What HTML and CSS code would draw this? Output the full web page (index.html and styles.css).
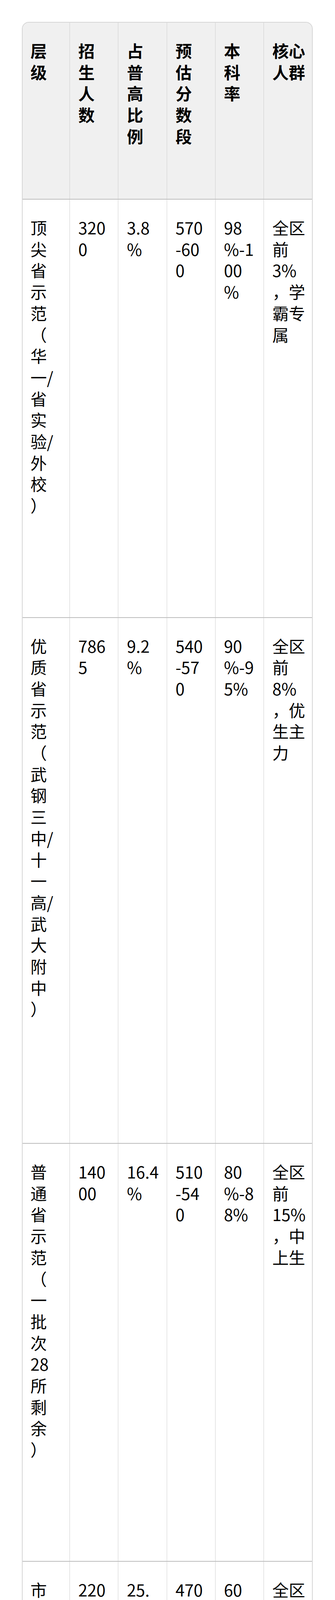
FILE: index.html
```html
<!DOCTYPE html>
<html lang="zh-CN">
<head>
<meta charset="utf-8">
<title>武汉中考各层级高中招生对照表</title>
<link rel="stylesheet" href="styles.css">
</head>
<body>
<div class="table-wrap">
  <table class="tier-table">
    <colgroup>
      <col class="c1"><col class="c2"><col class="c3"><col class="c4"><col class="c5"><col class="c6">
    </colgroup>
    <thead>
      <tr class="r-head">
        <th>层<br>级</th>
        <th>招<br>生<br>人<br>数</th>
        <th>占<br>普<br>高<br>比<br>例</th>
        <th>预<br>估<br>分<br>数<br>段</th>
        <th>本<br>科<br>率</th>
        <th>核心<br>人群</th>
      </tr>
    </thead>
    <tbody>
      <tr class="r1">
        <td>顶<br>尖<br>省<br>示<br>范<br>（<br>华<br>一/<br>省<br>实<br>验/<br>外<br>校<br>）</td>
        <td>320<br>0</td>
        <td>3.8<br>%</td>
        <td>570<br>-60<br>0</td>
        <td>98<br>%-1<br>00<br>%</td>
        <td>全区<br>前<br>3%<br>，学<br>霸专<br>属</td>
      </tr>
      <tr class="r2">
        <td>优<br>质<br>省<br>示<br>范<br>（<br>武<br>钢<br>三<br>中/<br>十<br>一<br>高/<br>武<br>大<br>附<br>中<br>）</td>
        <td>786<br>5</td>
        <td>9.2<br>%</td>
        <td>540<br>-57<br>0</td>
        <td>90<br>%-9<br>5%</td>
        <td>全区<br>前<br>8%<br>，优<br>生主<br>力</td>
      </tr>
      <tr class="r3">
        <td>普<br>通<br>省<br>示<br>范<br>（<br>一<br>批<br>次<br>28<br>所<br>剩<br>余<br>）</td>
        <td>140<br>00</td>
        <td>16.4<br>%</td>
        <td>510<br>-54<br>0</td>
        <td>80<br>%-8<br>8%</td>
        <td>全区<br>前<br>15%<br>，中<br>上生</td>
      </tr>
      <tr class="r4">
        <td>市<br>示<br>范<br>（<br>二<br>批<br>次<br>）</td>
        <td>220<br>00</td>
        <td>25.<br>8%</td>
        <td>470<br>-51<br>0</td>
        <td>60<br>%-7<br>5%</td>
        <td>全区<br>前<br>30%<br>，中<br>等生<br>（主<br>战场<br>）</td>
      </tr>
      <tr class="r5">
        <td>一<br>般<br>普<br>高<br>（<br>三<br>批<br>次<br>）</td>
        <td>180<br>00</td>
        <td>21.1<br>%</td>
        <td>430<br>-47<br>0</td>
        <td>35<br>%-5<br>5%</td>
        <td>全区<br>前<br>45%<br>，临<br>界生</td>
      </tr>
      <tr class="r6">
        <td>中<br>职<br>综<br>合<br>高<br>中<br>（<br>四<br>批<br>次<br>）</td>
        <td>800<br>0</td>
        <td>9.4<br>%</td>
        <td>400<br>-43<br>0</td>
        <td>25<br>%-4<br>0%<br>（<br>职<br>教<br>高<br>考<br>）</td>
        <td>全区<br>前<br>50<br>%，<br>兜底<br>生</td>
      </tr>
      <tr class="r7 total">
        <td>普<br>高<br>总<br>计</td>
        <td>852<br>49</td>
        <td>100<br>%</td>
        <td>400<br>-60<br>0</td>
        <td>—</td>
        <td>10.6<br>万考<br>生</td>
      </tr>
    </tbody>
  </table>
</div>
</body>
</html>
```
FILE: styles.css
```css
html, body {
  margin: 0;
  padding: 0;
  background: #ffffff;
}

body {
  padding: 56px 57px 0 56px;
  font-family: "Noto Sans CJK SC", "Noto Sans", sans-serif;
  color: #000000;
}

.table-wrap {
  width: 745px;
  box-sizing: border-box;
  border: 2px solid #d6d6d6;
  border-radius: 18px;
  overflow: hidden;
}

.tier-table {
  width: 100%;
  border-collapse: collapse;
  table-layout: fixed;
}

.c1 { width: 120px; }
.c2 { width: 124.5px; }
.c3 { width: 124.5px; }
.c4 { width: 124px; }
.c5 { width: 124px; }
.c6 { width: 124px; }

.tier-table th,
.tier-table td {
  font-size: 42px;
  line-height: 54.7px;
  padding: 44px 0 0 22px;
  vertical-align: top;
  text-align: left;
  border-left: 1px solid #cfcfcf;
  white-space: nowrap;
  text-spacing-trim: space-all;
}

.tier-table th:first-child,
.tier-table td:first-child {
  border-left: none;
  padding-left: 20px;
}

.tier-table th {
  font-weight: 700;
  background: #f0f0f0;
}

.tier-table tbody tr {
  border-top: 2px solid #bdbdbd;
}

.total td {
  font-weight: 700;
}

.r-head { height: 452px; }
.r1 { height: 1070.5px; }
.r2 { height: 1346.5px; }
.r3 { height: 1070px; }
.r4 { height: 656px; }
.r5 { height: 729px; }
.r6 { height: 865px; }
.r7 { height: 373px; }
```
